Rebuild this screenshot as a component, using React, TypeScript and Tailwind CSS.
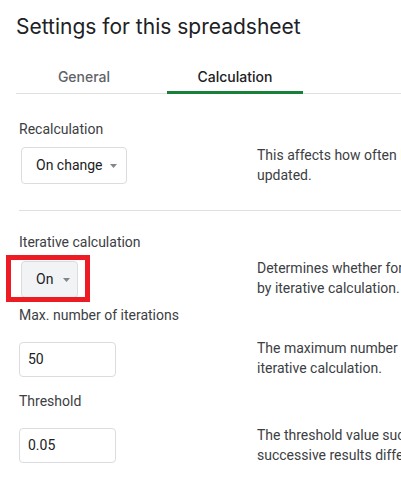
import React from "react";

function Caret() {
  return (
    <svg width="7" height="4" viewBox="0 0 7 4" className="shrink-0">
      <path d="M0 0 L7 0 L3.5 4 Z" fill="#80868b" />
    </svg>
  );
}

function Desc({ lines, className }: { lines: string[]; className?: string }) {
  return (
    <div className={"whitespace-nowrap text-[14px] leading-[20px] text-[#3c4043] " + (className ?? "")}>
      {lines.map((l, i) => (
        <div key={i}>{l}</div>
      ))}
    </div>
  );
}

export default function App() {
  return (
    <div
      className="relative w-[401px] h-[480px] overflow-hidden bg-white"
      style={{ fontFamily: "Roboto, 'Liberation Sans', sans-serif" }}
    >
      <h1
        className="pl-4 pt-[11px] text-[21px] leading-8 text-[#202124]"
        style={{ fontFamily: "Inter, 'Noto Sans', sans-serif" }}
      >
        Settings for this spreadsheet
      </h1>

      <div
        className="mt-[19px] ml-4 flex border-b border-[#e0e0e0] text-[14px] font-medium"
        style={{ fontFamily: "Inter, 'Noto Sans', sans-serif" }}
      >
        <div className="w-[136px] h-[32px] -mb-px flex items-center justify-center text-[#5f6368] border-b-[3px] border-transparent">
          General
        </div>
        <div className="ml-[15px] w-[136px] h-[32px] -mb-px flex items-center justify-center text-[#202124] border-b-[3px] border-[#188038]">
          Calculation
        </div>
      </div>

      <div className="pl-[19px] pt-[25px]">
        <div className="text-[14px] leading-[20px] text-[#3c4043]">Recalculation</div>
        <div className="mt-2 flex items-start">
          <div className="w-[238px] shrink-0">
            <div className="ml-[2px] w-[106px] h-[37px] rounded border border-[#dadce0] flex items-center pl-[14px] pr-[9px] justify-between text-[14px] text-[#202124] whitespace-nowrap">
              <span>On change</span>
              <Caret />
            </div>
          </div>
          <Desc
            className="-mt-[2px]"
            lines={["This affects how often NOW, TODAY, RAND and RANDBETWEEN are", "updated."]}
          />
        </div>

        <div className="mt-[25px] h-px bg-[#e0e0e0]" />

        <div className="mt-[21px] text-[14px] leading-[20px] text-[#3c4043]">Iterative calculation</div>
        <div className="mt-[9px] flex items-start">
          <div className="w-[238px] shrink-0">
            <div className="ml-[2px] w-[57px] h-[37px] rounded border border-[#dadce0] bg-[#f1f3f4] flex items-center pl-[14px] pr-[7px] justify-between text-[14px] text-[#202124]">
              <span>On</span>
              <Caret />
            </div>
          </div>
          <Desc
            className="-mt-[3px]"
            lines={["Determines whether formulas with circular references are resolved", "by iterative calculation."]}
          />
        </div>

        <div className="mt-[7px] text-[14px] leading-[20px] text-[#3c4043]">Max. number of iterations</div>
        <div className="mt-[17px] flex items-start">
          <div className="w-[238px] shrink-0">
            <div className="w-[97px] h-[35px] rounded border border-[#dadce0] flex items-center pl-[8px] text-[14px] text-[#202124]">
              50
            </div>
          </div>
          <Desc
            className="-mt-[4px]"
            lines={["The maximum number of times a formula can be recalculated during", "iterative calculation."]}
          />
        </div>

        <div className="mt-[13px] text-[14px] leading-[20px] text-[#3c4043]">Threshold</div>
        <div className="mt-[17px] flex items-start">
          <div className="w-[238px] shrink-0">
            <div className="w-[97px] h-[35px] rounded border border-[#dadce0] flex items-center pl-[8px] text-[14px] text-[#202124]">
              0.05
            </div>
          </div>
          <Desc
            className="-mt-[3px]"
            lines={["The threshold value such that iterative calculation stops when", "successive results differ by less than this value."]}
          />
        </div>
      </div>

      <div className="absolute left-[6px] top-[255px] w-[84px] h-[47px] border-[5px] border-[#ed1c24]" />
    </div>
  );
}
